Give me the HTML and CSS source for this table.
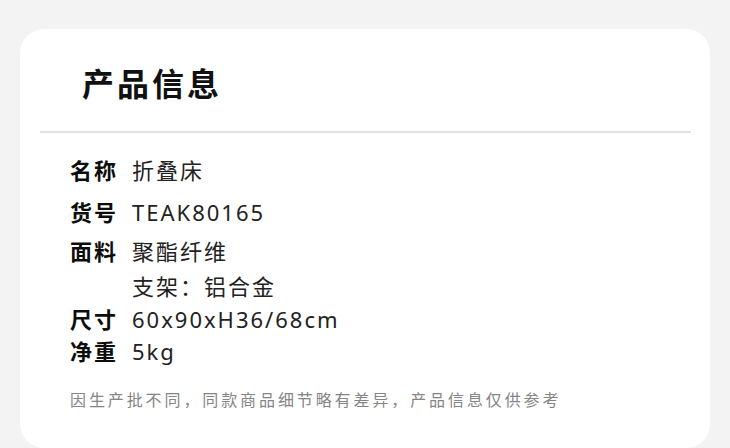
FILE: index.html
```html
<!DOCTYPE html>
<html lang="zh-CN">
<head>
  <meta charset="UTF-8">
  <meta name="viewport" content="width=device-width, initial-scale=1.0">
  <title>产品信息</title>
  <link rel="stylesheet" href="styles.css">
</head>
<body>
  <!-- 产品信息卡片 -->
  <div class="card">
    <div class="card-head">
      <h2 class="title">产品信息</h2>
    </div>
    <div class="line"></div>
    <div class="info">
      <div class="row row-name">
        <span class="label">名称</span>
        <span class="value">折叠床</span>
      </div>
      <div class="row row-sku">
        <span class="label">货号</span>
        <span class="value">TEAK80165</span>
      </div>
      <div class="row row-fabric">
        <span class="label">面料</span>
        <div class="value">
          <div>聚酯纤维</div>
          <div class="sub">支架：铝合金</div>
        </div>
      </div>
      <div class="row row-size">
        <span class="label">尺寸</span>
        <span class="value">60x90xH36/68cm</span>
      </div>
      <div class="row">
        <span class="label">净重</span>
        <span class="value">5kg</span>
      </div>
    </div>
    <p class="tip">因生产批不同，同款商品细节略有差异，产品信息仅供参考</p>
  </div>
</body>
</html>
```

FILE: styles.css
```css
body {
  margin: 0;
  padding: 29px 20px 0;
  background: #f3f3f3;
  font-family: "Noto Sans", "Noto Sans CJK SC", sans-serif;
  overflow: hidden;
}
.card {
  width: 690px;
  height: 419px;
  background: #fff;
  border-radius: 24px;
  box-sizing: border-box;
}
.card-head {
  height: 102px;
  box-sizing: border-box;
  padding: 35px 0 0 62px;
}
.title {
  margin: 0;
  font-size: 32px;
  line-height: 40px;
  font-weight: 700;
  letter-spacing: 3px;
  color: #111;
}
.line {
  height: 2px;
  margin: 0 19px 0 20px;
  background: #e2e2e2;
}
.info {
  padding: 21px 0 0 50px;
}
.row {
  display: flex;
  font-size: 22px;
  line-height: 32px;
  letter-spacing: 2px;
}
.row-name {
  margin-bottom: 10px;
}
.row-sku {
  margin-bottom: 7px;
}
.row-fabric .sub {
  margin-top: 3px;
}
.row-fabric {
  margin-bottom: 1px;
}
.label {
  width: 62px;
  font-weight: 700;
  color: #0d0d0d;
  flex-shrink: 0;
}
.value {
  color: #222;
}
.tip {
  margin: 21px 0 0 50px;
  font-size: 16px;
  line-height: 24px;
  letter-spacing: 2.9px;
  color: #858585;
}
```
